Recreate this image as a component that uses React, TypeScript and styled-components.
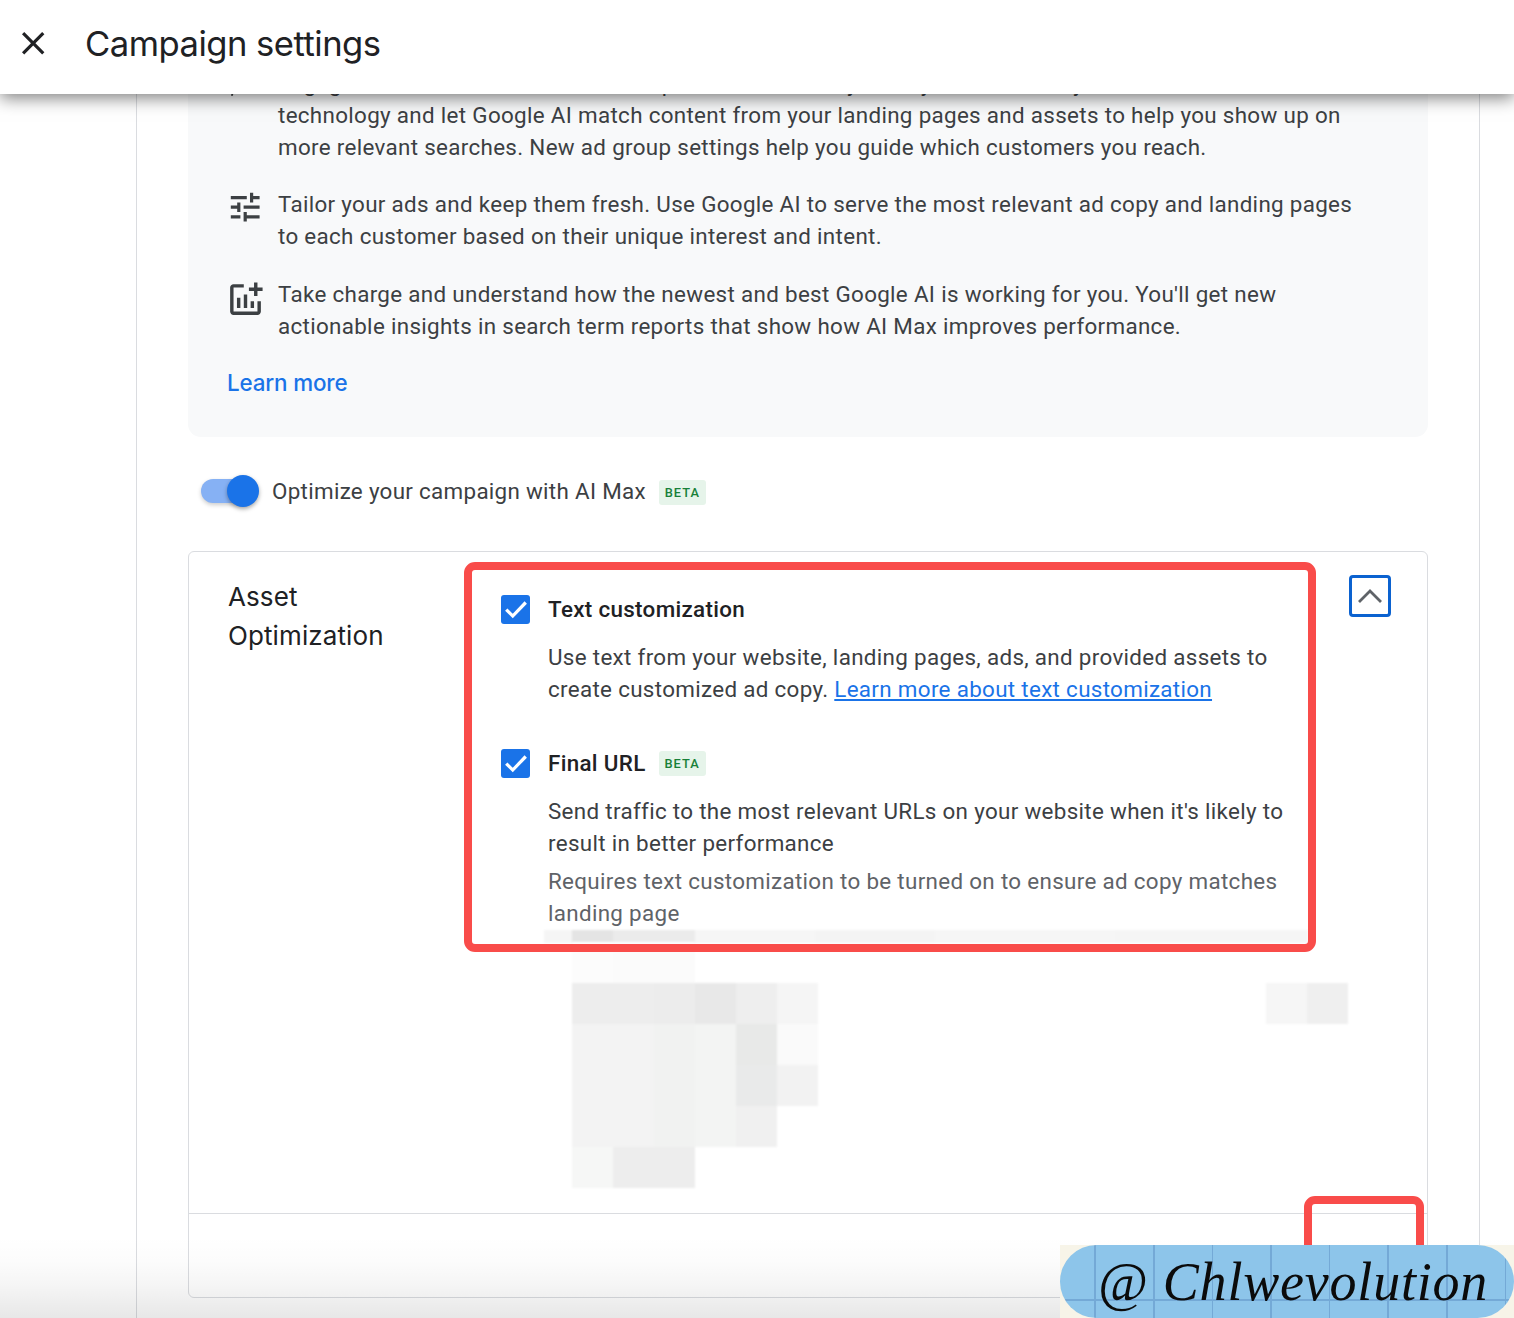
import React from "react";
import styled, { createGlobalStyle } from "styled-components";

const Global = createGlobalStyle`
  html, body { margin: 0; padding: 0; background: #fff; }
  * { box-sizing: border-box; }
  body { font-family: Roboto, "Liberation Sans", sans-serif; }
`;

const Page = styled.div`
  position: relative;
  width: 1514px;
  height: 1318px;
  overflow: hidden;
  display: flex;
  flex-direction: column;
  background: #fff;
`;

const Header = styled.header`
  position: relative;
  z-index: 5;
  flex: 0 0 94px;
  display: flex;
  align-items: center;
  padding: 0 0 8px 14px;
  background: #fff;
  box-shadow: 0 4px 16px rgba(0, 0, 0, 0.5);
`;

const CloseIcon = styled.svg`
  width: 38.4px;
  height: 38.4px;
  fill: #202124;
  margin-right: 32.6px;
`;

const Title = styled.h1`
  margin: 0;
  font-family: Inter, sans-serif;
  font-weight: 400;
  font-size: 34.6px;
  letter-spacing: -0.5px;
  color: #202124;
`;

const Main = styled.main`
  flex: 1;
  overflow: hidden;
`;

const Column = styled.div`
  display: flow-root;
  width: 1344px;
  height: 100%;
  margin-left: 136px;
  padding: 0 51px;
  border-left: 1px solid #dadce0;
  border-right: 1px solid #dadce0;
`;

const Panel = styled.section`
  margin-top: -27px;
  padding: 0 0 38px 39px;
  background: #f8f9fa;
  border-radius: 0 0 13px 13px;
`;

const Row = styled.div<{ $top?: number }>`
  display: flex;
  align-items: flex-start;
  gap: 12.6px;
  margin-top: ${(p) => p.$top ?? 0}px;
`;

const RowIcon = styled.svg`
  flex: 0 0 38.4px;
  width: 38.4px;
  height: 38.4px;
  fill: #3c4043;
`;

const TuneIcon = styled(RowIcon)`
  margin: 0 1px 0 -1px;
`;

const ChartIcon = styled(RowIcon)`
  flex: 0 0 41px;
  width: 41px;
  height: 41px;
  margin: 1px -0.6px 0 -2px;
`;

const Body = styled.p`
  margin: 0;
  font-size: 22.4px;
  line-height: 32px;
  letter-spacing: 0.32px;
  color: #3c4043;
`;

const LearnMore = styled.a`
  display: block;
  margin-top: 25px;
  font-family: Inter, sans-serif;
  font-size: 22.4px;
  font-weight: 500;
  line-height: 32px;
  letter-spacing: -0.15px;
  color: #1a73e8;
`;

const ToggleRow = styled.div`
  display: flex;
  align-items: center;
  height: 32px;
  margin: 38px 0 44px;
  padding-left: 13px;
`;

const Track = styled.span`
  position: relative;
  display: block;
  width: 50px;
  height: 24px;
  border-radius: 12px;
  background: #86b1f4;
  box-shadow: 0 2px 4px rgba(0, 0, 0, 0.2);
`;

const Thumb = styled.span`
  position: absolute;
  left: 26px;
  top: -4px;
  width: 32px;
  height: 32px;
  border-radius: 50%;
  background: #1a73e8;
  box-shadow: 0 2px 4px rgba(0, 0, 0, 0.35);
`;

const ToggleLabel = styled(Body)`
  margin-left: 21px;
  letter-spacing: 0.3px;
`;

const Beta = styled.span`
  display: inline-flex;
  align-items: center;
  justify-content: center;
  width: 47px;
  height: 25px;
  margin-left: 13px;
  border-radius: 3px;
  background: #e6f4ea;
  color: #188038;
  font-size: 12.8px;
  font-weight: 500;
  letter-spacing: 1.05px;
`;

const ToggleBeta = styled(Beta)`
  margin: 2px 0 0 13px;
`;

const Card = styled.section`
  position: relative;
  height: 747px;
  border: 1px solid #dadce0;
  border-radius: 6px;
  display: flex;
  flex-direction: column;
`;

const CardBody = styled.div`
  flex: 0 0 661px;
  display: flex;
  align-items: flex-start;
`;

const Divider = styled.hr`
  flex: 0 0 1px;
  width: 100%;
  height: 1px;
  margin: 0;
  border: 0;
  background: #dadce0;
`;

const CardTitle = styled.h2`
  flex: 0 0 312px;
  margin: 0;
  padding: 25px 40px 0 39px;
  font-family: Inter, sans-serif;
  font-weight: 400;
  font-size: 26px;
  line-height: 39px;
  letter-spacing: 0.1px;
  color: #202124;
`;

const Options = styled.div`
  flex: 0 0 794px;
  min-width: 0;
  padding-top: 41px;
`;

const OptionHead = styled.div<{ $top?: number }>`
  display: flex;
  align-items: center;
  height: 32px;
  margin-top: ${(p) => p.$top ?? 0}px;
`;

const Check = styled.span`
  display: flex;
  align-items: center;
  justify-content: center;
  flex: 0 0 29px;
  height: 29px;
  margin-right: 18px;
  border-radius: 3px;
  background: #1a73e8;
`;

const CheckMark = styled.svg`
  width: 26px;
  height: 26px;
  fill: none;
  stroke: #fff;
  stroke-width: 3;
`;

const OptionName = styled(Body)`
  font-weight: 500;
  color: #202124;
`;

const OptionText = styled(Body)<{ $top: number; $muted?: boolean }>`
  margin: ${(p) => p.$top}px 0 0 47px;
  color: ${(p) => (p.$muted ? "#5f6368" : "#3c4043")};
`;

const InlineLink = styled.a`
  color: #1a73e8;
  text-decoration: underline;
`;

const Strip = styled.div`
  display: flex;
  width: 764px;
  height: 13px;
  margin: 1px 0 0 43px;
  filter: blur(0.8px);
`;

const StripCell = styled.span<{ $w: number; $tone: string }>`
  flex: ${(p) => (p.$w ? `0 0 ${p.$w}px` : "1")};
  background: ${(p) => p.$tone};
`;

const Mosaic = styled.div`
  display: flex;
  justify-content: space-between;
  align-items: flex-start;
  width: 776px;
  margin-left: 71px;
  filter: blur(0.8px);
`;

const MosaicGrid = styled.div<{ $cols: number; $top?: number }>`
  display: grid;
  grid-template-columns: repeat(${(p) => p.$cols}, 41px);
  grid-auto-rows: 41px;
  margin-top: ${(p) => p.$top ?? 0}px;
`;

const MosaicCell = styled.span<{ $tone: string }>`
  background: ${(p) => p.$tone};
`;

const Chevron = styled.button`
  flex: 0 0 42px;
  height: 42px;
  margin: 23px 0 0 54px;
  padding: 0;
  display: flex;
  align-items: center;
  justify-content: center;
  background: #fff;
  border: 3px solid #0b62d0;
  border-radius: 4px;
`;

const ChevronIcon = styled.svg`
  width: 26px;
  height: 16px;
  fill: none;
  stroke: #5f6368;
  stroke-width: 2.8;
`;

const RedBox = styled.div<{ $l: number; $t: number; $w: number; $h: number }>`
  position: absolute;
  left: ${(p) => p.$l}px;
  top: ${(p) => p.$t}px;
  width: ${(p) => p.$w}px;
  height: ${(p) => p.$h}px;
  border: 8px solid #f94c4a;
  border-radius: 11px;
  pointer-events: none;
`;

const Fade = styled.div`
  position: absolute;
  left: 0;
  right: 0;
  bottom: 0;
  height: 82px;
  background: linear-gradient(
    to bottom,
    rgba(0, 0, 0, 0),
    rgba(0, 0, 0, 0.012) 30%,
    rgba(0, 0, 0, 0.04) 60%,
    rgba(0, 0, 0, 0.095)
  );
  pointer-events: none;
`;

const Watermark = styled.div`
  position: absolute;
  right: 0;
  bottom: 0;
  width: 454px;
  height: 73px;
  background: #f7f4e8;
`;

const Pill = styled.div`
  display: flex;
  align-items: center;
  height: 100%;
  padding-left: 38px;
  border-radius: 37px;
  background-color: #8dc5ea;
  background-image:
    repeating-linear-gradient(to right, transparent 0 34.5px, #74a9d6 34.5px 36px, transparent 36px 58.6px),
    linear-gradient(to bottom, transparent 54px, #74a9d6 54px 56px, transparent 56px);
  font-family: "Liberation Serif", serif;
  font-style: italic;
  font-size: 54px;
  letter-spacing: 0.8px;
  color: #0b0b0b;
  white-space: nowrap;
`;

const stripCells: [number, string][] = [
  [28, "#f5f5f5"],
  [41, "#e4e4e4"],
  [82, "#ebebeb"],
  [120, "#f6f6f6"],
  [120, "#f4f4f4"],
  [180, "#f6f6f6"],
  [0, "#f5f5f5"],
];

const T = "transparent";
const mosaic = [
  "#fcfcfc", "#fbfbfb", "#fbfbfb", T, T, T,
  "#ededed", "#ededed", "#ececec", "#e8e8e8", "#eeeeee", "#f5f5f5",
  "#f3f3f3", "#f3f3f3", "#f1f2f1", "#f3f4f3", "#e8e9e8", "#fafafa",
  "#f3f3f3", "#f3f3f3", "#f1f2f1", "#f3f4f3", "#e9eaea", "#f2f2f2",
  "#f3f3f3", "#f3f3f3", "#f1f2f1", "#f3f4f3", "#f0f0f0", T,
  "#f6f7f6", "#ededed", "#ededed", T, T, T,
];

export default function App() {
  return (
    <Page>
      <Global />
      <Header>
        <CloseIcon viewBox="0 0 24 24">
          <path d="M19 6.41L17.59 5 12 10.59 6.41 5 5 6.41 10.59 12 5 17.59 6.41 19 12 13.41 17.59 19 19 17.59 13.41 12z" />
        </CloseIcon>
        <Title>Campaign settings</Title>
      </Header>
      <Main>
        <Column>
          <Panel>
            <Row>
              <RowIcon viewBox="0 0 24 24">
                <path d="M3.5 12l1.2 0-1 6-1.2 0z" />
              </RowIcon>
              <Body>
                Engage new customers on Search. Expand the reach of your keywords with keywordless
                <br />
                technology and let Google AI match content from your landing pages and assets to help you show up on
                <br />
                more relevant searches. New ad group settings help you guide which customers you reach.
              </Body>
            </Row>
            <Row $top={25}>
              <TuneIcon viewBox="0 0 24 24">
                <path d="M3 17v2h6v-2H3zM3 5v2h10V5H3zm10 16v-2h8v-2h-8v-2h-2v6h2zM7 9v2H3v2h4v2h2V9H7zm14 4v-2H11v2h10zm-6-4h2V7h4V5h-4V3h-2v6z" />
              </TuneIcon>
              <Body>
                Tailor your ads and keep them fresh. Use Google AI to serve the most relevant ad copy and landing pages
                <br />
                to each customer based on their unique interest and intent.
              </Body>
            </Row>
            <Row $top={26}>
              <ChartIcon viewBox="0 0 24 24">
                <path d="M22 5v2h-3v3h-2V7h-3V5h3V2h2v3h3zm-3 14H5V5h6V3H5c-1.1 0-2 .9-2 2v14c0 1.1.9 2 2 2h14c1.1 0 2-.9 2-2v-6h-2v6zm-4-6v4h2v-4h-2zm-4 4h2V9h-2v8zm-2 0v-6H7v6h2z" />
              </ChartIcon>
              <Body>
                Take charge and understand how the newest and best Google AI is working for you. You'll get new
                <br />
                actionable insights in search term reports that show how AI Max improves performance.
              </Body>
            </Row>
            <LearnMore>Learn more</LearnMore>
          </Panel>

          <ToggleRow>
            <Track>
              <Thumb />
            </Track>
            <ToggleLabel>Optimize your campaign with AI Max</ToggleLabel>
            <ToggleBeta>BETA</ToggleBeta>
          </ToggleRow>

          <Card>
            <CardBody>
              <CardTitle>
                Asset
                <br />
                Optimization
              </CardTitle>
              <Options>
                <OptionHead>
                  <Check>
                    <CheckMark viewBox="0 0 24 24">
                      <path d="M3 12.5l6 6L21 6" />
                    </CheckMark>
                  </Check>
                  <OptionName>Text customization</OptionName>
                </OptionHead>
                <OptionText $top={16}>
                  Use text from your website, landing pages, ads, and provided assets to
                  <br />
                  create customized ad copy. <InlineLink>Learn more about text customization</InlineLink>
                </OptionText>
                <OptionHead $top={42}>
                  <Check>
                    <CheckMark viewBox="0 0 24 24">
                      <path d="M3 12.5l6 6L21 6" />
                    </CheckMark>
                  </Check>
                  <OptionName>Final URL</OptionName>
                  <Beta>BETA</Beta>
                </OptionHead>
                <OptionText $top={16}>
                  Send traffic to the most relevant URLs on your website when it's likely to
                  <br />
                  result in better performance
                </OptionText>
                <OptionText $top={6} $muted>
                  Requires text customization to be turned on to ensure ad copy matches
                  <br />
                  landing page
                </OptionText>
                <Strip>
                  {stripCells.map(([w, tone], i) => (
                    <StripCell key={i} $w={w} $tone={tone} />
                  ))}
                </Strip>
                <Mosaic>
                  <MosaicGrid $cols={6} $top={-1}>
                    {mosaic.map((tone, i) => (
                      <MosaicCell key={i} $tone={tone} />
                    ))}
                  </MosaicGrid>
                  <MosaicGrid $cols={2} $top={40}>
                    <MosaicCell $tone="#f6f6f6" />
                    <MosaicCell $tone="#efefef" />
                  </MosaicGrid>
                </Mosaic>
              </Options>
              <Chevron aria-label="Collapse">
                <ChevronIcon viewBox="0 0 26 16">
                  <path d="M2 14L13 3l11 11" />
                </ChevronIcon>
              </Chevron>
            </CardBody>
            <Divider />
            <RedBox $l={275} $t={10} $w={852} $h={390} />
            <RedBox $l={1115} $t={644} $w={120} $h={100} />
          </Card>
        </Column>
      </Main>
      <Fade />
      <Watermark>
        <Pill>@ Chlwevolution</Pill>
      </Watermark>
    </Page>
  );
}
